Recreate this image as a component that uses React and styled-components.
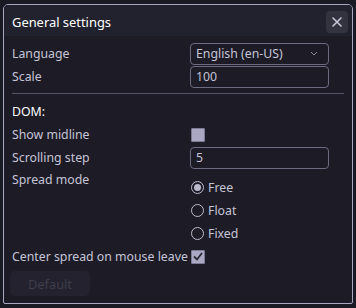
import React from "react";
import styled, { createGlobalStyle } from "styled-components";

const Global = createGlobalStyle`
  html, body { margin: 0; padding: 0; background: #1a1a24; }
  body { font-family: "Noto Sans", "Open Sans", sans-serif; }
  * { box-sizing: border-box; }
`;

const Window = styled.div`
  margin: 4px 0 0 3px;
  width: 350px;
  height: 300px;
  border: 1.5px solid #a9a6c2;
  border-radius: 5px 5px 2px 2px;
  background: #1c1b26;
  display: flex;
  flex-direction: column;
  overflow: hidden;
`;

const Header = styled.div`
  height: 31px;
  background: #22212e;
  display: flex;
  align-items: center;
  justify-content: space-between;
  padding: 3px 4px 0 8px;
`;

const Title = styled.div`
  color: #ffffff;
  font-size: 12.9px;
`;

const CloseBtn = styled.div`
  width: 22px;
  height: 22px;
  border-radius: 4px;
  background: #33323f;
  display: flex;
  align-items: center;
  justify-content: center;
`;

const Body = styled.div`
  padding: 6px 8px 0 8px;
  display: flex;
  flex-direction: column;
`;

const Row = styled.div`
  display: grid;
  grid-template-columns: 178px 139px;
  align-items: ${(p) => (p.$top ? "start" : "center")};
  min-height: 23px;
`;

const Label = styled.div`
  color: #c6c4d6;
  font-size: 12.3px;
  line-height: 18px;
  white-space: nowrap;
  padding-top: ${(p) => (p.$top ? 2 : 0)}px;
`;

const Field = styled.div`
  height: 22px;
  border: 1px solid #6c6b82;
  border-radius: 4px;
  display: flex;
  align-items: center;
  justify-content: space-between;
  padding: 0 10px 0 5px;
  color: #c6c4d6;
  font-size: 12.3px;
`;

const Divider = styled.div`
  height: 1px;
  background: #55546a;
  margin: 5px 0 6px 0;
  width: 332px;
`;

const Section = styled.div`
  color: #ffffff;
  font-size: 12.3px;
  line-height: 18px;
  height: 23px;
  display: flex;
  align-items: center;
`;

const Check = styled.div`
  width: 14px;
  height: 14px;
  border: 1px solid #7d7b94;
  background: #a9a7c1;
  border-radius: 1px;
  display: flex;
  align-items: center;
  justify-content: center;
  margin-left: ${(p) => p.$ml || 0}px;
`;

const Radios = styled.div`
  display: flex;
  flex-direction: column;
  padding-top: 7px;
`;

const RadioRow = styled.div`
  display: flex;
  align-items: center;
  gap: 4px;
  height: 23px;
  color: #c6c4d6;
  font-size: 12.3px;
`;

const RadioDot = styled.div`
  width: 13px;
  height: 13px;
  margin-left: 1px;
  border-radius: 50%;
  border: 1.2px solid #bcbacd;
  display: flex;
  align-items: center;
  justify-content: center;
  &::after {
    content: "";
    display: ${(p) => (p.$on ? "block" : "none")};
    width: 7px;
    height: 7px;
    border-radius: 50%;
    background: #bcbacd;
  }
`;

const InlineRow = styled.div`
  display: flex;
  align-items: center;
  gap: 3px;
  height: 23px;
`;

const Button = styled.div`
  margin-top: 3px;
  margin-left: -2px;
  width: 80px;
  height: 25px;
  border-radius: 5px;
  background: #23222e;
  color: #3e3d4d;
  font-size: 12.8px;
  display: flex;
  align-items: center;
  justify-content: center;
`;

export default function App() {
  return (
    <>
      <Global />
      <Window>
        <Header>
          <Title>General settings</Title>
          <CloseBtn>
            <svg width="12" height="12" viewBox="0 0 12 12">
              <path d="M2 2 L10 10 M10 2 L2 10" stroke="#c8c6d8" strokeWidth="1.6" strokeLinecap="round" />
            </svg>
          </CloseBtn>
        </Header>
        <Body>
          <Row>
            <Label>Language</Label>
            <Field>
              <span>English (en-US)</span>
              <svg width="8" height="5" viewBox="0 0 8 5">
                <path d="M1 1 L4 4 L7 1" stroke="#8a889e" strokeWidth="1" fill="none" />
              </svg>
            </Field>
          </Row>
          <Row>
            <Label>Scale</Label>
            <Field>100</Field>
          </Row>
          <Divider />
          <Section>DOM:</Section>
          <Row>
            <Label>Show midline</Label>
            <Check $ml={1} />
          </Row>
          <Row>
            <Label>Scrolling step</Label>
            <Field>5</Field>
          </Row>
          <Row $top>
            <Label $top>Spread mode</Label>
            <Radios>
              <RadioRow><RadioDot $on />Free</RadioRow>
              <RadioRow><RadioDot />Float</RadioRow>
              <RadioRow><RadioDot />Fixed</RadioRow>
            </Radios>
          </Row>
          <InlineRow>
            <Label>Center spread on mouse leave</Label>
            <Check>
              <svg width="10" height="9" viewBox="0 0 10 9">
                <path d="M1 4.5 L4 7.5 L9 1" stroke="#2a2935" strokeWidth="1.8" fill="none" />
              </svg>
            </Check>
          </InlineRow>
          <Button>Default</Button>
        </Body>
      </Window>
    </>
  );
}
